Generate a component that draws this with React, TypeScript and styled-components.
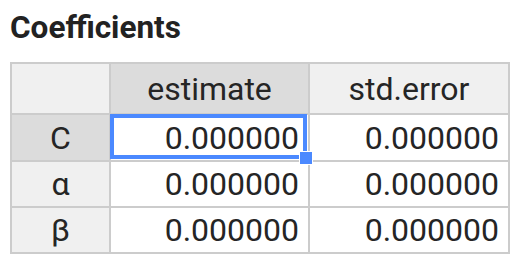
import styled, { createGlobalStyle } from 'styled-components'

const GlobalStyle = createGlobalStyle`
  body {
    margin: 0;
    background: #fff;
    font-family: Roboto, "Liberation Sans", sans-serif;
  }
`

const Page = styled.div`
  padding: 10px 10px 0 10px;
`

const Title = styled.h2`
  margin: 0 0 17px 0;
  font-size: 31.5px;
  line-height: 35px;
  font-weight: 700;
  color: #222;
`

const Grid = styled.table`
  width: 500px;
  table-layout: fixed;
  border-collapse: separate;
  border-spacing: 0;
  border-top: 2px solid #ccc;
  border-left: 2px solid #ccc;
  font-size: 32px;
  color: #252525;
`

const Row = styled.tr<{ $height: number }>`
  height: ${p => p.$height}px;
`

const Cell = styled.td<{ $head?: boolean, $active?: boolean, $align?: string }>`
  position: relative;
  box-sizing: border-box;
  padding: 0 9px;
  border-right: 2px solid #ccc;
  border-bottom: 2px solid #ccc;
  white-space: nowrap;
  vertical-align: middle;
  text-align: ${p => p.$align ?? 'right'};
  background: ${p => p.$head ? (p.$active ? '#dcdcdc' : '#f0f0f0') : '#fff'};
  font-weight: 400;
`

const Selection = styled.div`
  position: absolute;
  left: -1px;
  top: -1px;
  right: 1px;
  bottom: 1px;
  border: 4px solid #4b89ff;
  z-index: 2;
  pointer-events: none;
`

const Handle = styled.div`
  position: absolute;
  right: -5px;
  bottom: -5px;
  width: 12px;
  height: 12px;
  border: 1px solid #fff;
  background: #4b89ff;
  z-index: 3;
`

const columns = ['estimate', 'std.error']
const rows = [
    { name: 'C', values: ['0.000000', '0.000000'], height: 47 },
    { name: 'α', values: ['0.000000', '0.000000'], height: 46 },
    { name: 'β', values: ['0.000000', '0.000000'], height: 46 }
]

// selected cell
const activeRow = 0
const activeCol = 0

export default () => {
    return (
        <Page>
            <GlobalStyle />
            <Title>Coefficients</Title>
            <Grid>
                <colgroup>
                    <col style={{ width: 99 }} />
                    <col style={{ width: 199 }} />
                    <col style={{ width: 200 }} />
                </colgroup>
                <thead>
                    <Row $height={51}>
                        <Cell as={'th'} $head $align={'center'} />
                        {
                            columns.map((column, index) =>
                                <Cell
                                    as={'th'}
                                    key={column}
                                    $head
                                    $active={index === activeCol}
                                    $align={'center'}
                                >
                                    { column }
                                </Cell>
                            )
                        }
                    </Row>
                </thead>
                <tbody>
                {
                    rows.map((row, rowIndex) =>
                        <Row key={row.name} $height={row.height}>
                            <Cell
                                as={'th'}
                                $head
                                $active={rowIndex === activeRow}
                                $align={'center'}
                            >
                                { row.name }
                            </Cell>
                            {
                                row.values.map((value, colIndex) =>
                                    <Cell key={colIndex}>
                                        { value }
                                        {
                                            rowIndex === activeRow && colIndex === activeCol && (
                                                <>
                                                    <Selection />
                                                    <Handle />
                                                </>
                                            )
                                        }
                                    </Cell>
                                )
                            }
                        </Row>
                    )
                }
                </tbody>
            </Grid>
        </Page>
    )
}
